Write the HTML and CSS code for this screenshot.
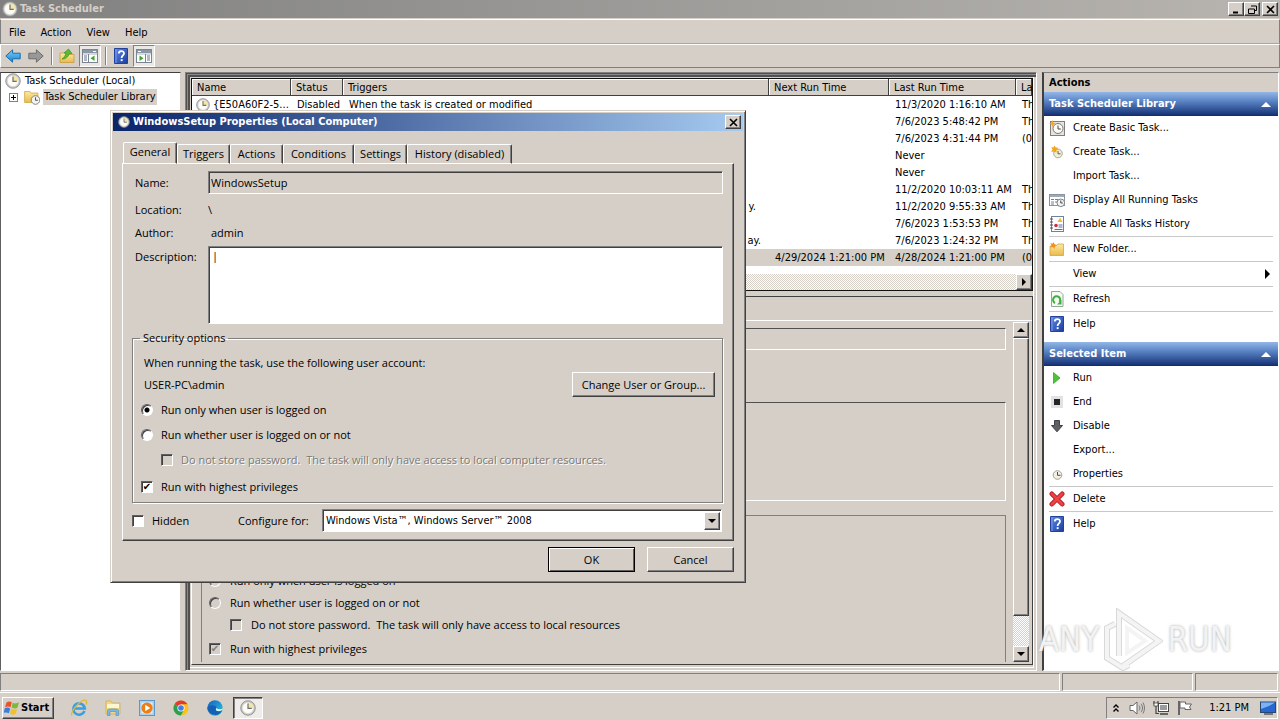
FILE: index.html
```html
<!DOCTYPE html>
<html lang="en">
<head>
<meta charset="utf-8">
<title>Task Scheduler</title>
<link rel="stylesheet" href="styles.css">
</head>
<body>
<svg class="defs" aria-hidden="true">
  <defs>
    <linearGradient id="g-blue" x1="0" y1="0" x2="1" y2="1"><stop offset="0" stop-color="#5d8be8"/><stop offset="1" stop-color="#1b3c9c"/></linearGradient>
    <linearGradient id="g-fold" x1="0" y1="0" x2="0" y2="1"><stop offset="0" stop-color="#fbe9a0"/><stop offset="1" stop-color="#e9bb4c"/></linearGradient>
    <linearGradient id="g-arrow" x1="0" y1="0" x2="0" y2="1"><stop offset="0" stop-color="#7fd0f5"/><stop offset="1" stop-color="#1583d0"/></linearGradient>
    <linearGradient id="g-edge" x1="0" y1="0" x2="1" y2="1"><stop offset="0" stop-color="#1c5fb8"/><stop offset=".6" stop-color="#1f9fd8"/><stop offset="1" stop-color="#4fd07a"/></linearGradient>
  </defs>
  <symbol id="clock" viewBox="0 0 16 16"><circle cx="8" cy="8" r="7.3" fill="#c4c4c0" stroke="#8a8a8c" stroke-width=".8"/><circle cx="8" cy="8" r="5.600" fill="#fdfdf6" stroke="#d8d8d8" stroke-width=".6"/><path d="M8 8V2.600A5.400 5.400 0 0 1 13.400 8z" fill="#f3e6a2"/><path d="M8 3.400V8.400H11.800" fill="none" stroke="#6a6e78" stroke-width="1.200"/></symbol>
  <symbol id="back" viewBox="0 0 16 16"><path d="M.8 8 7.600 1.800V5.200H15.200V10.800H7.600V14.200z" fill="url(#g-arrow)" stroke="#1a6dab"/></symbol>
  <symbol id="forward" viewBox="0 0 16 16"><path d="M15.200 8 8.400 1.800V5.200H.8V10.800H8.400V14.200z" fill="#989898" stroke="#6d6d6d"/></symbol>
  <symbol id="up" viewBox="0 0 16 16"><path d="M1 5H6L7.500 6.500H15V14.500H1z" fill="url(#g-fold)" stroke="#c4952e" stroke-width=".7"/><path d="M3 11C5 10 6.500 7.500 7 5H5L9.500 1 13 5.500H10.500C9.500 8.500 6.500 11.500 3 11z" fill="#5dbb32" stroke="#2f8a1c" stroke-width=".6"/></symbol>
  <symbol id="panel" viewBox="0 0 16 16"><rect x=".5" y="1.500" width="15" height="13" fill="#fff" stroke="#7b8591"/><rect x="1" y="2" width="14" height="3" fill="#8a97a8"/><path d="M11 3.500H14" stroke="#fff"/><path d="M1 6H15" stroke="#a9b3be"/><path d="M6.500 6V14" stroke="#7b8591"/><path d="M2 8H5M2 10H5M2 12H5" stroke="#5e7590"/><path d="M12.500 7.500V13L8.500 10.200z" fill="#3fa324"/></symbol>
  <symbol id="help" viewBox="0 0 16 16"><path d="M1.500.5H14.500V15.500H1.500z" fill="url(#g-blue)" stroke="#23409a"/><path d="M3 1V15" stroke="#7b9eec"/><path d="M5.800 5.500C5.800 2.300 11 2.300 11 5.300 11 7.500 8.600 7.300 8.600 10" fill="none" stroke="#fff" stroke-width="1.800"/><rect x="7.700" y="11.200" width="1.900" height="1.900" fill="#fff"/></symbol>
  <symbol id="folderclock" viewBox="0 0 16 16"><path d="M.6 2.500H6L7.200 4H14V13.500H.6z" fill="url(#g-fold)" stroke="#c99f3e" stroke-width=".7"/><circle cx="11.500" cy="11" r="4.300" fill="#f4f4ee" stroke="#85858a"/><path d="M11.500 8.300V11.300H13.800" fill="none" stroke="#555"/></symbol>
  <symbol id="basic" viewBox="0 0 16 16"><rect x="1.500" y="1.500" width="14" height="14" fill="#e8e4dc" stroke="#837f78"/><circle cx="9" cy="8.500" r="5" fill="#fbfbf6" stroke="#77797f"/><path d="M9 5.500V9H11.800" fill="none" stroke="#444"/><path d="M3.500 0 4.500 2.500 7 3.500 4.500 4.500 3.500 7 2.500 4.500 0 3.500 2.500 2.500z" fill="#f5a720"/></symbol>
  <symbol id="create" viewBox="0 0 16 16"><circle cx="9" cy="9.500" r="4.300" fill="#f3edcf" stroke="#a9a79e"/><path d="M9 7V9.800H11.500" fill="none" stroke="#5f5f65"/><path d="M5.500 1.500 6.700 3.500 9.500 3.800 7.500 5.800 7.500 8.500 5 7.500 2.300 8 3.500 5.500 2.300 3 4.500 3.500z" fill="#f5a31b"/></symbol>
  <symbol id="running" viewBox="0 0 16 16"><rect x=".5" y="2.500" width="15" height="11" fill="#fff" stroke="#8b949e"/><path d="M1 4H15" stroke="#9daab8" stroke-width="2"/><path d="M2 7.500H5M6 7.500H9M2 10H5M6 10H8M2 12H5" stroke="#73808e"/><circle cx="11.800" cy="10.800" r="3.800" fill="#f5f5f0" stroke="#7c8288"/><path d="M11.800 8.500V11H13.800" fill="none" stroke="#444"/></symbol>
  <symbol id="history" viewBox="0 0 16 16"><rect x="2.500" y=".5" width="12" height="15" fill="#fdfdff" stroke="#6f7fa8"/><path d="M1 3H4M1 6H4M1 9H4M1 12H4" stroke="#4c4c5c"/><path d="M11 1.500 13.500 6H8.500z" fill="#edbf25"/><circle cx="7" cy="9.500" r="1.800" fill="#d12f32"/><path d="M9.500 9H13.500M9.500 11H13.500M5.500 13.500H13.500" stroke="#5c6ca4"/></symbol>
  <symbol id="newfolder" viewBox="0 0 16 16"><path d="M1 5H7L9 3H14.500V14.500H1z" fill="url(#g-fold)" stroke="#cf9c36" stroke-width=".7"/><path d="M4.500 1 5.500 3.300 8 4 5.800 5.300 5.500 8 3.800 6 1 6.500 2.500 4.200 1.300 2 3.600 2.800z" fill="#f28f18"/></symbol>
  <symbol id="refresh" viewBox="0 0 16 16"><path d="M2.500.5H11L14 3.500V15.500H2.500z" fill="#f4fbf2" stroke="#90a895"/><path d="M6 12A3.600 3.600 0 1 1 10.500 11" fill="none" stroke="#3fae3f" stroke-width="2"/><path d="M12.500 9V13.500H8z" fill="#3fae3f"/></symbol>
  <symbol id="run" viewBox="0 0 16 16"><path d="M4.500 2.500 11 8 4.500 13.500z" fill="#4bc536" stroke="#319b23" stroke-width=".7"/></symbol>
  <symbol id="end" viewBox="0 0 16 16"><rect x="2" y="2" width="12" height="12" fill="#e2e2e4"/><rect x="5" y="5" width="6" height="6" fill="#252525"/></symbol>
  <symbol id="disable" viewBox="0 0 16 16"><path d="M5.500 2.500H10.500V7.500H13.500L8 13.800 2.500 7.500H5.500z" fill="#5f6163" stroke="#3f4042"/></symbol>
  <symbol id="props" viewBox="0 0 16 16"><circle cx="8.500" cy="9" r="4.300" fill="#f3efe3" stroke="#a3a19c"/><path d="M8.500 6V9.300H11.500" fill="none" stroke="#4c4c55"/></symbol>
  <symbol id="delete" viewBox="0 0 16 16"><path d="M2.800 2.800 13.200 13.200M13.200 2.800 2.800 13.200" stroke="#b51b20" stroke-width="4.600" stroke-linecap="round"/><path d="M2.800 2.800 13.200 13.200M13.200 2.800 2.800 13.200" stroke="#ec4347" stroke-width="2.800" stroke-linecap="round"/></symbol>
</svg>

<div class="app">
  <header class="titlebar">
    <svg class="ico"><use href="#clock"/></svg>
    <span class="titlebar-text">Task Scheduler</span>
    <button class="cap" aria-label="Minimize"><svg viewBox="0 0 9 9"><path d="M1 7.500H6" stroke="#000" stroke-width="2"/></svg></button>
    <button class="cap" aria-label="Restore"><svg viewBox="0 0 9 9"><path d="M3 1H8.500V5.500H6.500M.5 4H6.500V8.500H.5z" stroke="#000" fill="none"/></svg></button>
    <button class="cap cap-close" aria-label="Close"><svg viewBox="0 0 9 9"><path d="M1 1 8 8M8 1 1 8" stroke="#000" stroke-width="1.600"/></svg></button>
  </header>
  <nav class="menubar">
    <button>File</button><button>Action</button><button>View</button><button>Help</button>
  </nav>
  <div class="toolbar">
    <button class="tool" aria-label="Back"><svg class="ico"><use href="#back"/></svg></button>
    <button class="tool" aria-label="Forward"><svg class="ico"><use href="#forward"/></svg></button>
    <span class="tool-sep"></span>
    <button class="tool" aria-label="Up one level"><svg class="ico"><use href="#up"/></svg></button>
    <button class="tool on" aria-label="Show console tree"><svg class="ico"><use href="#panel"/></svg></button>
    <span class="tool-sep"></span>
    <button class="tool" aria-label="Help"><svg class="ico"><use href="#help"/></svg></button>
    <button class="tool on" aria-label="Show action pane"><svg class="ico flip"><use href="#panel"/></svg></button>
  </div>

  <main class="panes">
    <section class="tree">
      <div class="node"><svg class="ico"><use href="#clock"/></svg><span>Task Scheduler (Local)</span></div>
      <div class="node child"><button class="expander" aria-label="Expand"><svg viewBox="0 0 7 7"><path d="M1 3.500H6M3.500 1V6" stroke="#000"/></svg></button><svg class="ico"><use href="#folderclock"/></svg><span class="picked">Task Scheduler Library</span></div>
    </section>

    <section class="center">
      <div class="list">
        <table>
          <colgroup><col class="c-name"><col class="c-status"><col><col class="c-next"><col class="c-last"><col class="c-result"></colgroup>
          <thead><tr><th>Name</th><th>Status</th><th>Triggers</th><th>Next Run Time</th><th>Last Run Time</th><th>La</th></tr></thead>
          <tbody>
            <tr><td><svg class="rowico"><use href="#clock"/></svg>{E50A60F2-5...</td><td>Disabled</td><td>When the task is created or modified</td><td></td><td>11/3/2020 1:16:10 AM</td><td>Th</td></tr>
            <tr><td></td><td></td><td></td><td></td><td>7/6/2023 5:48:42 PM</td><td>Th</td></tr>
            <tr><td></td><td></td><td></td><td></td><td>7/6/2023 4:31:44 PM</td><td>(0</td></tr>
            <tr><td></td><td></td><td></td><td></td><td>Never</td><td></td></tr>
            <tr><td></td><td></td><td></td><td></td><td>Never</td><td></td></tr>
            <tr><td></td><td></td><td></td><td></td><td>11/2/2020 10:03:11 AM</td><td>Th</td></tr>
            <tr><td></td><td></td><td class="tail">y.</td><td></td><td>11/2/2020 9:55:33 AM</td><td>Th</td></tr>
            <tr><td></td><td></td><td></td><td></td><td>7/6/2023 1:53:53 PM</td><td>Th</td></tr>
            <tr><td></td><td></td><td class="tail wide">ay.</td><td></td><td>7/6/2023 1:24:32 PM</td><td>Th</td></tr>
            <tr class="selected"><td></td><td></td><td></td><td>4/29/2024 1:21:00 PM</td><td>4/28/2024 1:21:00 PM</td><td>(0</td></tr>
          </tbody>
        </table>
        <div class="hscroll"><button class="sb" aria-label="Scroll right"><svg viewBox="0 0 8 8"><path d="M2 0 6 4 2 8z"/></svg></button></div>
      </div>
      <div class="detail">
        <div class="detail-tabs"></div>
        <div class="detail-page">
          <div class="detail-form">
            <div class="d-name"></div>
            <div class="d-desc"></div>
            <div class="d-group">
              <label class="opt"><input type="radio" name="bg" disabled>Run only when user is logged on</label>
              <label class="opt"><input type="radio" name="bg" disabled>Run whether user is logged on or not</label>
              <label class="opt sub"><input type="checkbox" disabled>Do not store password.&nbsp; The task will only have access to local resources</label>
              <label class="opt last"><input type="checkbox" checked disabled>Run with highest privileges</label>
            </div>
          </div>
          <div class="vscroll">
            <button class="sb" aria-label="Scroll up"><svg viewBox="0 0 8 8"><path d="M0 6 4 2 8 6z"/></svg></button>
            <div class="thumb"></div>
            <button class="sb" aria-label="Scroll down"><svg viewBox="0 0 8 8"><path d="M0 2 4 6 8 2z"/></svg></button>
          </div>
        </div>
      </div>
    </section>

    <aside class="actions">
      <h2 class="actions-title">Actions</h2>
      <h3 class="bar">Task Scheduler Library<svg viewBox="0 0 10 5"><path d="M0 5 5 0 10 5z"/></svg></h3>
      <ul>
        <li><button><svg class="ico"><use href="#basic"/></svg>Create Basic Task...</button></li>
        <li><button><svg class="ico"><use href="#create"/></svg>Create Task...</button></li>
        <li><button><svg class="ico"></svg>Import Task...</button></li>
        <li><button><svg class="ico"><use href="#running"/></svg>Display All Running Tasks</button></li>
        <li><button><svg class="ico"><use href="#history"/></svg>Enable All Tasks History</button></li>
        <li class="sep"><button><svg class="ico"><use href="#newfolder"/></svg>New Folder...</button></li>
        <li class="sep"><button><svg class="ico"></svg>View<svg class="more" viewBox="0 0 5 10"><path d="M0 0 5 5 0 10z"/></svg></button></li>
        <li class="sep"><button><svg class="ico"><use href="#refresh"/></svg>Refresh</button></li>
        <li class="sep"><button><svg class="ico"><use href="#help"/></svg>Help</button></li>
      </ul>
      <h3 class="bar second">Selected Item<svg viewBox="0 0 10 5"><path d="M0 5 5 0 10 5z"/></svg></h3>
      <ul>
        <li><button><svg class="ico"><use href="#run"/></svg>Run</button></li>
        <li><button><svg class="ico"><use href="#end"/></svg>End</button></li>
        <li><button><svg class="ico"><use href="#disable"/></svg>Disable</button></li>
        <li><button><svg class="ico"></svg>Export...</button></li>
        <li><button><svg class="ico"><use href="#props"/></svg>Properties</button></li>
        <li class="sep"><button><svg class="ico"><use href="#delete"/></svg>Delete</button></li>
        <li class="sep"><button><svg class="ico"><use href="#help"/></svg>Help</button></li>
      </ul>
    </aside>
  </main>

  <div class="statusbar"><span></span><span></span><span></span></div>

  <footer class="taskbar">
    <button class="start">
      <svg viewBox="0 0 16 16"><path d="M2.500 2.500C4.500 1 6 1.300 7.800 2.300L6.500 7.300C4.800 6.200 3 6.300 1 7.300z" fill="#e8542a"/><path d="M8.800 2.800C10.800 3.800 12.800 3.600 15 2.300L13.500 7.500C11.500 8.700 9.500 8.600 7.500 7.600z" fill="#7cb83a"/><path d="M.8 8.300C2.800 7.300 4.500 7.400 6.200 8.400L4.900 13.300C3 12.200 1.500 12.200-.5 13z" fill="#3a7ddb"/><path d="M7.200 8.800C9.200 9.700 11.200 9.700 13.200 8.600L11.800 13.800C9.800 15 7.800 14.800 5.900 13.800z" fill="#f3bf2a"/></svg>Start</button>
    <div class="quick">
      <button aria-label="Internet Explorer"><svg viewBox="0 0 18 18"><path d="M14.500 12A5.700 5.700 0 1 1 14.800 9.500H4.500" fill="none" stroke="#3b9fe0" stroke-width="2.600"/><path d="M2 16.500C-.5 13 12-1 16 1.500 17 2.500 16.500 4.500 16 5.500" fill="none" stroke="#e3b93a" stroke-width="1.300"/></svg></button>
      <button aria-label="Windows Explorer"><svg viewBox="0 0 18 18"><path d="M2 2H7L8.500 4H16V15H2z" fill="#f3d77c" stroke="#d0a94b" stroke-width=".7"/><path d="M3 5H15V9H3z" fill="#fdf6d2"/><path d="M3.500 16.500V11C3.500 9.500 14.500 9.500 14.500 11V16.500H12V12.500H6V16.500z" fill="#7db8e4" stroke="#4d8cc0" stroke-width=".6"/></svg></button>
      <button aria-label="Media Player"><svg viewBox="0 0 18 18"><rect x="1.500" y="1.500" width="15" height="15" fill="#a9d0ee" stroke="#5e98c8"/><rect x="3.500" y="3.500" width="11" height="11" fill="#dceefa"/><circle cx="9" cy="9" r="5.600" fill="#ee7d14"/><path d="M7.200 5.800 12.200 9 7.200 12.200z" fill="#fff"/></svg></button>
      <button aria-label="Chrome"><svg viewBox="0 0 18 18"><circle cx="9" cy="9" r="7.500" fill="#fbc116"/><path d="M9 9 2.500 5.200A7.500 7.500 0 0 1 15.500 5.300H9z" fill="#e33b2e"/><path d="M2.500 5.200A7.500 7.500 0 0 0 8.800 16.500L12 11 9 9z" fill="#2da04e"/><circle cx="9" cy="9" r="3.600" fill="#fff"/><circle cx="9" cy="9" r="2.800" fill="#3f7fe8"/></svg></button>
      <button aria-label="Edge"><svg viewBox="0 0 18 18"><circle cx="9" cy="9" r="7.700" fill="url(#g-edge)"/><path d="M1.300 9C2 5.500 10.500 5 10.500 8.800 10.500 10 9.500 10.300 10 11.300 11 13 15 12.500 16 11.500 14 18 3 17.500 1.300 9z" fill="#1560b4"/><path d="M10.500 8.800C10.500 10 9.500 10.300 10 11.300 11 12.500 14.500 12.300 16.300 10.800L17 9.500C15.500 10.500 12 11 10.500 8.800z" fill="#e4f4fb"/></svg></button>
    </div>
    <button class="running" aria-label="Task Scheduler"><svg class="ico"><use href="#clock"/></svg></button>
    <div class="tray">
      <svg class="chev" viewBox="0 0 8 10"><path d="M1.500 4.500 4 2 6.500 4.500M1.500 8.500 4 6 6.500 8.500" fill="none" stroke="#000" stroke-width="1.400"/></svg>
      <svg class="t1" viewBox="0 0 16 16"><path d="M1 5.500H4L8 2V14L4 10.500H1z" fill="#fff" stroke="#666"/><path d="M10 5.500C11.200 7 11.200 9 10 10.500M12 3.800C14 6.500 14 9.500 12 12.200M14 2.500C16 6 16 10 14 13.500" fill="none" stroke="#777"/></svg>
      <svg class="t2" viewBox="0 0 16 16"><rect x="5.500" y="3.500" width="10" height="8" fill="#9b9b9b" stroke="#444"/><rect x="6.500" y="4.500" width="8" height="6" fill="none" stroke="#fff"/><path d="M7 14H15" stroke="#666" stroke-width="2"/><path d="M1 1V4H5V1M3 4V13.500H6" fill="none" stroke="#444" stroke-width="1.200"/><rect x="1" y="3" width="4" height="3" fill="#fff" stroke="#444" stroke-width=".8"/></svg>
      <svg class="t3" viewBox="0 0 16 16"><path d="M2 1V15" stroke="#666" stroke-width="2"/><path d="M3 2H8.500V4H14.500L12.500 7 14 9.500H8V8H3z" fill="#fff" stroke="#666"/></svg>
      <time>1:21 PM</time>
      <svg class="t4" viewBox="0 0 16 14"><rect x=".5" y="1" width="15" height="10.500" fill="#2767cf" stroke="#28466f"/><path d="M1 1.500H15L9 5 1 8z" fill="#7cb4f2"/><path d="M4 13H13" stroke="#4d5968" stroke-width="1.500"/></svg>
    </div>
  </footer>

  <div class="watermark" aria-hidden="true"><span>ANY</span><svg viewBox="0 0 60 64"><path d="M12 16 4 20V50L20 60 26 57M16 48V5L56 33 20 58" fill="none" stroke="#d9d9d9" stroke-width="6"/><path d="M12 16 4 20V50L20 60 26 57M16 48V5L56 33 20 58M24 20V45L42 33z" fill="none" stroke="#f4f4f4" stroke-width="4"/></svg><span>RUN</span></div>

  <section class="dialog" role="dialog" aria-labelledby="dlg-title">
    <header class="dlg-title"><svg><use href="#clock"/></svg><span id="dlg-title">WindowsSetup Properties (Local Computer)</span><button class="cap" aria-label="Close dialog"><svg viewBox="0 0 9 9"><path d="M1 1 8 8M8 1 1 8" stroke="#000" stroke-width="1.600"/></svg></button></header>
    <div class="dlg-body">
      <div class="tabs" role="tablist">
        <button class="tab active" role="tab">General</button><button class="tab" role="tab">Triggers</button><button class="tab" role="tab">Actions</button><button class="tab cond" role="tab">Conditions</button><button class="tab" role="tab">Settings</button><button class="tab hist" role="tab">History (disabled)</button>
      </div>
      <div class="page">
        <div class="form">
          <label for="f-name">Name:</label><input id="f-name" value="WindowsSetup" readonly>
          <span>Location:</span><span class="loc">\</span>
          <span>Author:</span><span class="val">admin</span>
          <label for="f-desc">Description:</label><textarea id="f-desc">|</textarea>
        </div>
        <fieldset>
          <legend>Security options</legend>
          <p>When running the task, use the following user account:</p>
          <div class="account"><span>USER-PC\admin</span><button class="btn">Change User or Group...</button></div>
          <label class="opt"><input type="radio" name="run" checked>Run only when user is logged on</label>
          <label class="opt"><input type="radio" name="run">Run whether user is logged on or not</label>
          <label class="opt sub off"><input type="checkbox" disabled>Do not store password.&nbsp; The task will only have access to local computer resources.</label>
          <label class="opt chk"><input type="checkbox" checked>Run with highest privileges</label>
        </fieldset>
        <div class="config">
          <label class="opt hid"><input type="checkbox">Hidden</label>
          <label for="f-conf" class="conf-label">Configure for:</label>
          <div class="select"><select id="f-conf"><option>Windows Vista™, Windows Server™ 2008</option></select><span class="sb" aria-hidden="true"><svg viewBox="0 0 8 8"><path d="M0 2 4 6 8 2z"/></svg></span></div>
        </div>
      </div>
      <div class="dlg-buttons"><button class="btn default">OK</button><button class="btn">Cancel</button></div>
    </div>
  </section>
</div>
</body>
</html>
```
FILE: styles.css
```css
* { box-sizing: border-box; }
body {
  margin: 0;
  font: 11px/16px "DejaVu Sans Condensed", "DejaVu Sans", sans-serif;
  color: #000;
  background: #d5cfc8;
}
button, input, select, textarea { font: inherit; color: inherit; margin: 0; padding: 0; border: 0; border-radius: 0; background: none; }
.defs { position: absolute; width: 0; height: 0; }
.ico { width: 16px; height: 16px; flex: none; }
.app { position: relative; display: flex; flex-direction: column; height: 100vh; overflow: hidden; background: #d5cfc8; }

.titlebar { display: flex; align-items: center; height: 18px; padding: 0 2px; background: linear-gradient(90deg, #808080, #b8b5b0); }
.titlebar-text { flex: 1; margin-left: 2px; font: bold 11px/16px "DejaVu Sans Condensed", sans-serif; color: #d5cfc8; }
.cap { display: grid; place-items: center; width: 16px; height: 14px; background: #d5cfc8; border: 1px solid; border-color: #fff #404040 #404040 #fff; box-shadow: inset -1px -1px #808080; }
.cap svg { width: 9px; height: 9px; }
.cap-close { margin-left: 2px; }

.menubar { display: flex; align-items: center; gap: 15px; height: 25px; margin-top: 1px; padding: 2px 0 0 8px; border: 1px solid; border-color: #fff #808080 #aaa59d #808080; }
.toolbar { display: flex; align-items: center; height: 24px; padding-left: 1px; border: 1px solid; border-color: #fff #808080 #808080 #fff; }
.tool { display: grid; place-items: center; width: 22px; height: 22px; margin-right: 1px; }
.tool.on { background: #ebe8e4; border: 1px solid; border-color: #808080 #fff #fff #808080; }
.tool-sep { width: 2px; height: 18px; margin: 0 3px; border-left: 1px solid #808080; border-right: 1px solid #fff; }
.flip { transform: scaleX(-1); }

.panes { flex: 1; min-height: 0; display: grid; grid-template-columns: 181px minmax(0, 1fr) 237px; column-gap: 4px; padding: 4px 1px 2px 0; }
.tree { background: #fff; border: 1px solid; border-color: #404040 #d5cfc8 #fff #606060; padding: 0 4px; }
.node { display: flex; align-items: center; height: 16px; gap: 4px; }
.node.child { padding-left: 4px; }
.node.child .ico { margin-left: 2px; }
.expander { display: grid; width: 9px; height: 9px; border: 1px solid #808080; background: #fff; }
.expander svg { width: 7px; height: 7px; }
.picked { background: #d5cfc8; padding: 0 1px; margin-left: -1px; }

.center { display: flex; flex-direction: column; border: 1px solid; border-color: #808080 #fff #fff #808080; padding: 5px 3px 5px 5px; box-shadow: inset 1px 1px #505050, inset 2px 2px #8a8a8a, inset 4px 4px #505050, inset -2px -2px #d5cfc8, inset -3px -3px #fff; margin-right: 1px; }
.list { display: flex; flex-direction: column; background: #fff; height: 213px; border: 1px solid #111; }
table { width: 100%; table-layout: fixed; border-collapse: collapse; }
.c-name { width: 99px; } .c-status { width: 52px; } .c-next { width: 120px; } .c-last { width: 127px; } .c-result { width: 16px; }
th, td { height: 17px; padding: 0 0 0 6px; font-weight: normal; text-align: left; line-height: 15px; white-space: nowrap; overflow: hidden; }
th { background: #d5cfc8; padding-left: 5px; box-shadow: inset -1px -1px #404040, inset 1px 1px #fff; }
td:first-child { padding-left: 4px; }
.rowico { width: 14px; height: 14px; margin-right: 3px; vertical-align: middle; }
.tail { text-align: right; padding-right: 13px; }
.tail.wide { padding-right: 8px; }
.selected { background: #d5cfc8; }
.hscroll, .vscroll { background: repeating-conic-gradient(#fff 0 25%, #d5cfc8 0 50%) 0 0 / 2px 2px; }
.hscroll { display: flex; justify-content: flex-end; height: 16px; margin-top: auto; }
.sb { display: grid; place-items: center; width: 16px; height: 16px; flex: none; background: #d5cfc8; border: 1px solid; border-color: #fff #404040 #404040 #fff; box-shadow: inset -1px -1px #808080; }
.sb svg { width: 8px; height: 8px; }

.detail { flex: 1; min-height: 0; display: flex; flex-direction: column; margin-top: 5px; border: 1px solid; border-color: #404040 #404040 #404040 #fff; }
.detail-tabs { height: 23px; }
.detail-page { flex: 1; min-height: 0; display: flex; border-top: 1px solid #fff; padding: 1px 3px 2px 8px; }
.detail-form { flex: 1; display: flex; flex-direction: column; overflow: hidden; padding: 6px 7px 0 1px; font-family: "Open Sans", sans-serif; }
.d-name, .d-desc { flex: none; border: 1px solid; border-color: #505050 #fff #fff #505050; }
.d-name { height: 22px; }
.d-desc { height: 99px; margin: 52px 0 14px; }
.d-group { flex: 1; min-height: 0; border: 1px solid #808080; border-bottom: 0; padding: 54px 0 0 7px; }
.d-group .opt { height: 22px; }
.d-group .opt input { background: #d5cfc8; margin-right: 9px; }
.d-group .opt.sub { padding-left: 21px; }
.d-group .last { height: 26px; }
.vscroll { display: flex; flex-direction: column; width: 16px; }
.thumb { flex: 1; margin-bottom: 30px; background: #d5cfc8; border: 1px solid; border-color: #fff #404040 #404040 #fff; box-shadow: inset -1px -1px #808080; }

.opt { display: flex; align-items: center; }
.opt input { appearance: none; flex: none; width: 12px; height: 12px; margin-right: 8px; background: #fff; border: 1px solid; border-color: #606060 #fff #fff #606060; box-shadow: inset 1px 1px #404040; }
.opt input[type=radio] { border-radius: 50%; }
.opt input[type=radio]:checked { background: radial-gradient(circle, #000 0 2px, #fff 3px); }
.opt input[type=checkbox]:checked::before { content: "✔"; display: block; font: 10px/10px "DejaVu Sans", sans-serif; text-align: center; }
.opt input:disabled::before { color: #808080; }

.actions { display: flex; flex-direction: column; background: #fff; border: 1px solid; border-color: #808080 #fff #fff #404040; border-left-width: 2px; }
.actions-title, .bar { margin: 0; font: bold 11px/16px "DejaVu Sans Condensed", sans-serif; padding-left: 5px; }
.actions-title { height: 19px; padding-top: 2px; background: #d5cfc8; }
.bar { display: flex; align-items: center; justify-content: space-between; height: 24px; padding-right: 7px; color: #fff; background: linear-gradient(#93b6e6, #5e88c8 35%, #1d3c80 90%, #122b68); }
.bar svg { width: 10px; height: 5px; fill: #fff; }
.bar.second { margin-top: 6px; }
.actions ul { list-style: none; margin: 0; padding: 0 5px; }
.actions li.sep { border-top: 1px solid #c8c8c8; }
.actions li button { display: flex; align-items: center; gap: 8px; width: 100%; height: 24px; text-align: left; }
.more { width: 5px; height: 10px; margin: 0 3px 0 auto; }

.statusbar { display: grid; grid-template-columns: minmax(0, 1fr) 131px 83px; gap: 2px; height: 18px; padding-right: 2px; }
.statusbar span { border: 1px solid; border-color: #808080 #fff #fff #808080; }

.taskbar { display: flex; align-items: center; height: 28px; margin-top: 1px; padding: 2px 2px 0; border-top: 1px solid #fff; }
.start { display: flex; align-items: center; gap: 1px; width: 52px; height: 22px; padding-left: 1px; font: bold 11px/16px "DejaVu Sans Condensed", sans-serif; border: 1px solid; border-color: #fff #404040 #404040 #fff; box-shadow: inset -1px -1px #808080; }
.start svg { width: 16px; height: 16px; }
.quick { display: flex; gap: 16px; margin: 0 9px 0 16px; }
.quick button, .quick svg { display: block; width: 18px; height: 18px; }
.running { display: grid; place-items: center; width: 30px; height: 22px; background: #eeebe8; border: 1px solid; border-color: #404040 #fff #fff #404040; box-shadow: inset 1px 1px #808080; }
.tray { display: flex; align-items: center; height: 22px; margin-left: auto; padding: 0 1px 0 5px; border: 1px solid; border-color: #808080 #fff #fff #808080; }
.tray svg { width: 16px; height: 16px; }
.tray .chev { width: 8px; height: 10px; margin-right: 9px; }
.tray .t1, .tray .t2 { margin-right: 8px; }
.tray .t3 { margin-right: 16px; }
.tray time { margin-right: 11px; }
.tray .t4 { height: 14px; }

.watermark { position: absolute; right: 48px; bottom: 48px; display: flex; align-items: center; gap: 4px; font: 33px/64px "Liberation Sans Narrow", "DejaVu Sans Condensed", sans-serif; color: #f3f3f3; text-shadow: 0 0 3px #aaa; }
.watermark svg { width: 60px; height: 64px; }

.dialog { position: absolute; left: 110px; top: 110px; width: 636px; background: #d5cfc8; border: 1px solid; border-color: #d5cfc8 #404040 #404040 #d5cfc8; box-shadow: inset 1px 1px #fff, inset -1px -1px #808080; padding: 2px; font-family: "Open Sans", sans-serif; }
.dlg-title { display: flex; align-items: center; height: 18px; padding: 0 2px 0 5px; color: #fff; font: bold 11px/16px "DejaVu Sans Condensed", sans-serif; background: linear-gradient(90deg, #0a246a, #a6caf0); }
.dlg-title > svg { width: 12px; height: 12px; margin-right: 3px; }
.dlg-title span { flex: 1; }
.dlg-body { padding: 11px 9px 8px; }
.tabs { display: flex; align-items: flex-end; padding-left: 1px; height: 22px; }
.tab { width: 53px; height: 20px; border: 1px solid; border-color: #fff #404040 transparent #fff; border-radius: 2px 2px 0 0; box-shadow: inset -1px 0 #808080; white-space: nowrap; }
.tab.active { width: 54px; height: 22px; padding-bottom: 3px; }
.tab.cond { width: 71px; }
.tab.hist { width: 105px; }
.page { margin-top: -1px; border: 1px solid; border-color: #fff #404040 #404040 #fff; box-shadow: inset -1px -1px #808080; padding: 7px 10px 8px 9px; }
.form { display: grid; grid-template-columns: 76px minmax(0, 1fr); grid-template-rows: 24px 30px 16px 32px 51px; align-items: center; }
.form > label, .form > span { height: 16px; padding-left: 3px; }
.form > .loc { padding-left: 0; }
.form input, .form textarea { width: 100%; padding: 0 2px; border: 1px solid; border-color: #808080 #fff #fff #808080; box-shadow: inset 1px 1px #404040; }
.form input { height: 23px; align-self: start; }
.form textarea { grid-row: 4 / 6; grid-column: 2; align-self: end; height: 78px; padding: 1px 3px; resize: none; background: #fff; display: block; }
fieldset { margin: 6px 0; padding: 6px 7px 1px 8px; border: 1px solid #808080; box-shadow: 1px 1px #fff, inset 1px 1px #fff; min-width: 0; }
legend { padding: 0 3px; margin-left: -1px; }
fieldset p { margin: 3px 0 1px 3px; }
.account { display: flex; align-items: center; justify-content: space-between; height: 25px; padding-left: 3px; }
.btn { width: 87px; height: 25px; border: 1px solid; border-color: #fff #404040 #404040 #fff; box-shadow: inset -1px -1px #808080; }
.account .btn { width: 143px; }
.btn.default { border-color: #000; box-shadow: inset 1px 1px #fff, inset -1px -1px #606060; }
.page .opt { height: 25px; }
.page .opt.sub { padding-left: 20px; }
.page .off { color: #7c7872; text-shadow: 1px 1px #fff; }
.page .off input { background: #d5cfc8; }
.page .opt.chk { height: 29px; }
.config { display: flex; align-items: center; height: 23px; }
.hid { width: 106px; }
.conf-label { width: 84px; }
.select { flex: 1; display: flex; align-items: center; height: 23px; margin-right: 1px; padding-right: 1px; background: #fff; border: 1px solid; border-color: #808080 #fff #fff #808080; box-shadow: inset 1px 1px #404040; font-family: "DejaVu Sans Condensed", sans-serif; }
select { appearance: none; flex: 1; padding-left: 3px; }
.select .sb { height: 18px; }
.dlg-buttons { display: flex; justify-content: flex-end; gap: 12px; margin-top: 6px; }
```
